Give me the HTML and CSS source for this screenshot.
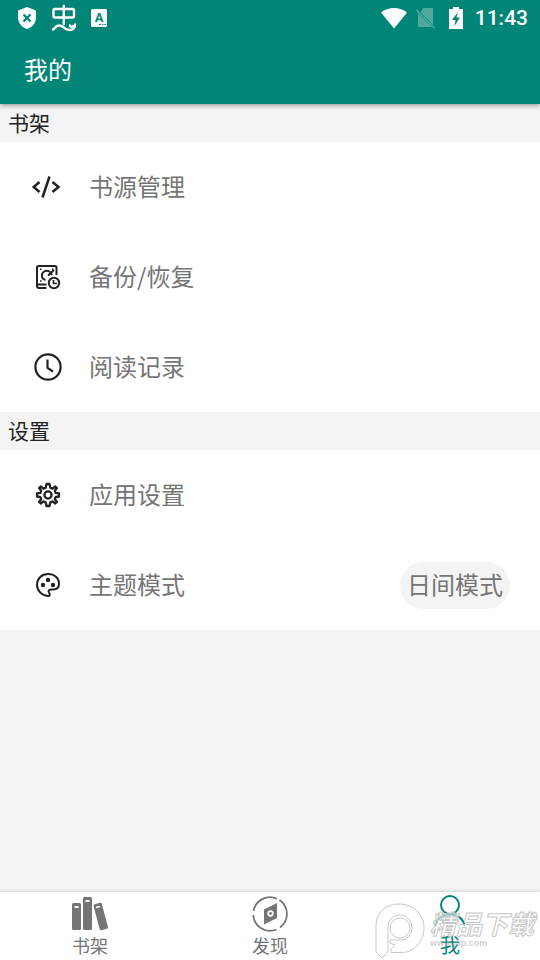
FILE: index.html
```html
<!DOCTYPE html>
<html lang="zh-CN">
<head>
<meta charset="utf-8">
<meta name="viewport" content="width=device-width, initial-scale=1">
<title>我的</title>
<link rel="stylesheet" href="styles.css">
</head>
<body>
<header class="top">
  <div class="status">
    <div class="status-group notices">
      <svg width="20" height="24" viewBox="0 0 20 24"><path fill="#fff" d="M10 1 L19 4.500 V11 C19 17 15.500 21 10 23 C4.500 21 1 17 1 11 V4.500Z"/><path d="M6.500 8.500l7 7m0-7l-7 7" stroke="#008577" stroke-width="2.200"/></svg>
      <svg width="26" height="28" viewBox="0 0 26 28" fill="none" stroke="#fff" stroke-width="2.400" stroke-linecap="round" stroke-linejoin="round"><path d="M4 5H21.500Q23 5 23 6.500V12Q23 13.500 21.500 13.500H4Q2.500 13.500 2.500 12V6.500Q2.500 5 4 5ZM12.800 2V20M2 25.500C4 25 4 21.500 8 21.500C13 21.500 13 26 18.500 26C22 26 24.500 23.500 24 20.500M19 21.500C19 23 21 23.500 22 22"/></svg>
      <svg width="16" height="18" viewBox="0 0 16 18"><rect width="16" height="18" rx="1.500" fill="#fff"/><text x="8" y="13" class="badge-letter">A</text><path d="M8 15.500h2m1 0h1.500m1 0h1.500" stroke="#008577"/></svg>
    </div>
    <div class="status-group">
      <svg width="26" height="22" viewBox="0 0 26 22"><path fill="#fff" d="M0 5.500C7-.500 19-.500 26 5.500L13 21.500Z"/></svg>
      <svg class="sim" width="20" height="22" viewBox="0 0 20 22"><path fill="#4da99f" d="M7 1H17V18L4.800 5.500ZM2 6L16 20H2Z"/><path d="M.500 3L18.500 21" stroke="#4da99f" stroke-width="1.600"/></svg>
      <svg class="battery" width="14" height="22" viewBox="0 0 14 22"><path fill="#fff" d="M4 0H10V2H14V22H0V2H4Z"/><path fill="#008577" d="M9 5L3 13H6.500L5.500 19L11 10.500H7.500Z"/></svg>
      <time class="clock">11:43</time>
    </div>
  </div>
  <h1 class="title">我的</h1>
</header>

<main class="content">
  <section>
    <h2 class="heading">书架</h2>
    <ul class="list">
      <li><a class="row" href="#sources">
        <svg class="row-icon" viewBox="0 0 32 32" fill="none" stroke="#222" stroke-width="2.500"><path d="M7.500 11L1.700 16L7.500 21M20.500 11L26.500 16L20.500 21M17.500 5.500L10.500 26.500"/></svg>
        <span class="label">书源管理</span></a></li>
      <li><a class="row" href="#backup">
        <svg class="row-icon" viewBox="0 0 32 32" fill="none" stroke="#222" stroke-width="2"><path d="M24.500 14V6.500Q24.500 5 23 5H6.500Q5 5 5 6.500V25Q5 27 7 27H14.500M5.500 23.500H14.500M13.500 19C9.500 18 9 13.500 11 11.500C13 9 16.500 9 18.500 11.500L20 14M16 14.500L22 9"/><circle cx="22" cy="22" r="5.200"/><path d="M21.500 19V22.500H25" stroke-width="1.700"/><path d="M8 8.200h1.500m10.500 0h1.500M8 20h1.500" stroke-width="1.500"/></svg>
        <span class="label">备份/恢复</span></a></li>
      <li><a class="row" href="#history">
        <svg class="row-icon" viewBox="0 0 32 32" fill="none" stroke="#222" stroke-width="2.200"><circle cx="16" cy="16" r="12.600"/><path d="M15.500 8.500V17L21 20.500"/></svg>
        <span class="label">阅读记录</span></a></li>
    </ul>
  </section>
  <section>
    <h2 class="heading">设置</h2>
    <ul class="list">
      <li><a class="row" href="#settings">
        <svg class="row-icon" viewBox="0 0 32 32" fill="none" stroke="#222" stroke-width="2.300" stroke-linejoin="round"><path d="M14.500 5H17.500L18.300 8.700L20.500 9.600L23.300 7.500L24.900 9.100L22.800 11.800L23.600 13.900L27 14.500V17.500L23.600 18.100L22.800 20.200L24.900 22.900L23.300 24.500L20.500 22.400L18.300 23.300L17.500 27H14.500L13.700 23.300L11.500 22.400L8.700 24.500L7.100 22.900L9.200 20.200L8.400 18.100L5 17.500V14.500L8.400 13.900L9.200 11.800L7.100 9.100L8.700 7.500L11.500 9.600L13.700 8.700Z"/><circle cx="16" cy="16" r="3.600"/></svg>
        <span class="label">应用设置</span></a></li>
      <li class="row">
        <svg class="row-icon" viewBox="0 0 32 32"><path d="M16 27C9.500 26.500 5 21.500 5 15.800C5 9.500 10 5 16 5C22.500 5 27 9 27 14.500C27 18.500 24.500 20.500 21 20.500H19C16.500 20.500 16 22.500 17.200 24C18.300 25.500 18 27 16 27Z" fill="none" stroke="#222" stroke-width="2"/><g fill="#222"><circle cx="11" cy="16" r="2.200"/><circle cx="16" cy="11" r="2.200"/><circle cx="21" cy="16" r="2.200"/></g></svg>
        <span class="label" id="theme-label">主题模式</span>
        <button class="pill" type="button" aria-describedby="theme-label">日间模式</button></li>
    </ul>
  </section>
</main>

<nav class="tabs">
  <a class="tab" href="#shelf">
    <svg width="36" height="36" viewBox="0 0 36 36"><g fill="#757575"><rect y="7" width="9" height="27" rx="1.500"/><rect x="11" y="1" width="9" height="33" rx="1.500"/><rect x="24.500" y="7" width="8.500" height="27" rx="1.500" transform="rotate(-15 28.700 20.500)"/></g><path d="M2.500 11h4M13.500 5h4M24 11.500l4-1" stroke="#fff" stroke-width="1.800"/></svg>
    <span>书架</span></a>
  <a class="tab" href="#discover">
    <svg width="36" height="36" viewBox="0 0 36 36"><g fill="none" stroke="#757575" stroke-width="1.800"><path d="M1.500 15A16.800 16.800 0 0 1 25 2.700M27.500 4A16.800 16.800 0 0 1 28 31.500M24.500 33.500A16.800 16.800 0 0 1 1.300 19"/></g><path fill="#757575" d="M12 13.500L25 7V22L12 28.500Z"/><circle cx="18.500" cy="17.500" r="2.300" fill="none" stroke="#fff" stroke-width="1.700"/></svg>
    <span>发现</span></a>
  <a class="tab active" href="#me" aria-current="page">
    <svg width="36" height="36" viewBox="0 0 36 36" fill="none" stroke="#008577" stroke-width="2"><circle cx="18" cy="9" r="9"/><path d="M3.500 30C4.500 23 10 18.500 18 18.500S31.500 23 32.500 30"/></svg>
    <span>我</span></a>
  <div class="watermark">
    <svg width="54" height="58" viewBox="0 0 54 58" fill="#fff" fill-opacity=".5" stroke="#c8c8c8"><path d="M2 50V22C3 9 13 2 25 2C39 2 50 12 50 26C50 39 40 51 27 50.500H17V47L21 43L16 41V38H26C34 38 38 32 38 26C38 18 32 13 26 13C18 13 14 19 14 26V50L8 56Z"/><circle cx="26" cy="26" r="10"/></svg>
    <div class="mark-text"><span class="mark-name">精品下载</span><span class="mark-url">www.j9p.com</span></div>
  </div>
</nav>
</body>
</html>
```

FILE: styles.css
```css
* {
  box-sizing: border-box;
}

body {
  margin: 0;
  min-height: 100vh;
  display: flex;
  flex-direction: column;
  background: #f4f4f4;
  color: #757575;
  font-family: "Noto Sans CJK SC", sans-serif;
  font-size: 24px;
}

a {
  color: inherit;
  text-decoration: none;
}

svg {
  flex: none;
  overflow: visible;
}

.top {
  position: relative;
  background: #008577;
  color: #fff;
  box-shadow: 0 1px 5px rgba(0, 0, 0, 0.45);
}

.status {
  display: flex;
  justify-content: space-between;
  height: 36px;
  padding: 0 12px 0 17px;
}

.status-group {
  display: flex;
  align-items: center;
}

.notices {
  gap: 14px;
}

.badge-letter {
  fill: #008577;
  font: bold 13px Roboto, sans-serif;
  text-anchor: middle;
}

.sim {
  margin-left: 9px;
}

.battery {
  margin: 0 12px 0 13px;
}

.clock {
  font: 500 21px/36px Roboto, sans-serif;
}

.title {
  margin: 0;
  padding: 0 24px 2px;
  font-size: 24px;
  font-weight: 400;
  line-height: 66px;
}

.content {
  flex: 1;
}

.heading {
  margin: 0;
  padding: 0 8px 2px;
  color: #222;
  font-size: 21px;
  font-weight: 400;
  line-height: 36px;
}

.list {
  margin: 0;
  padding: 0;
  list-style: none;
  background: #fff;
}

.row {
  display: flex;
  align-items: center;
  height: 90px;
  padding: 0 30px 0 32px;
}

.row-icon {
  width: 32px;
  height: 32px;
  margin-right: 25px;
}

.label {
  padding-bottom: 3px;
}

.pill {
  margin-left: auto;
  padding: 0 7px 3px;
  border: 0;
  border-radius: 24px;
  background: #f4f4f4;
  color: inherit;
  font: inherit;
  line-height: 44px;
}

.tabs {
  position: relative;
  display: flex;
  height: 68px;
  background: #fff;
  box-shadow: 0 -1px 3px rgba(0, 0, 0, 0.14);
}

.tab {
  flex: 1;
  display: flex;
  flex-direction: column;
  align-items: center;
  padding-top: 4px;
  font-size: 18px;
  line-height: 26px;
}

.active {
  color: #008577;
  font-size: 20px;
}

.watermark {
  position: absolute;
  right: 6px;
  bottom: 0;
  display: flex;
  gap: 2px;
  pointer-events: none;
}

.mark-text {
  display: flex;
  flex-direction: column;
  padding-top: 6px;
  color: rgba(255, 255, 255, 0.5);
  -webkit-text-stroke: 1px #c8c8c8;
}

.mark-name {
  font-size: 26px;
  font-style: italic;
  font-weight: 700;
  line-height: 30px;
}

.mark-url {
  color: rgba(180, 180, 180, 0.6);
  font: bold 9px/10px "Liberation Sans", sans-serif;
  -webkit-text-stroke: 0;
}
```
